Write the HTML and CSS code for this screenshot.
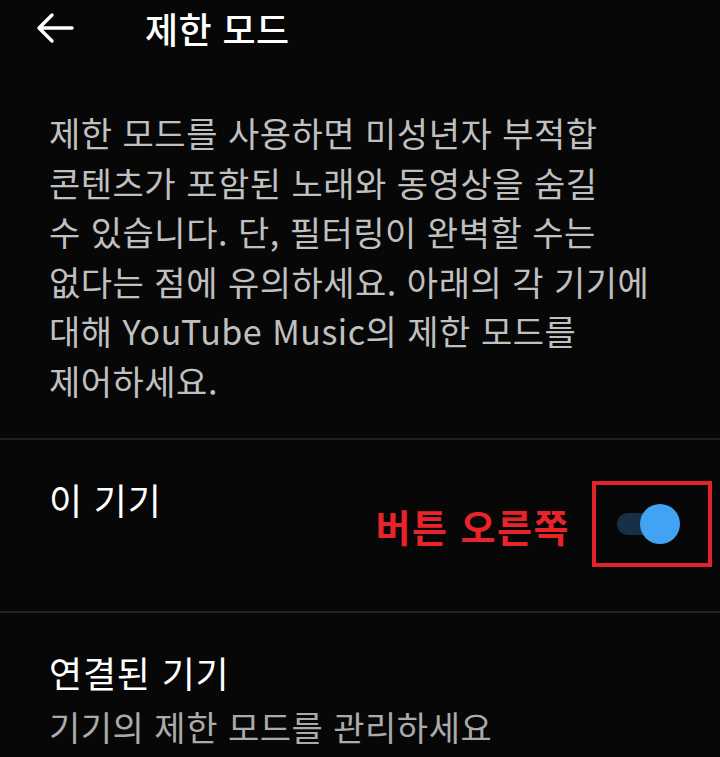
FILE: index.html
```html
<!DOCTYPE html>
<html lang="ko">
<head>
  <meta charset="UTF-8" />
  <meta name="viewport" content="width=device-width, initial-scale=1.0" />
  <title>제한 모드</title>
  <link rel="stylesheet" href="styles.css">
</head>
<body>
  <div class="screen">
    <header class="top-bar">
      <span class="back">
        <svg width="40" height="34" viewBox="0 0 40 34">
          <path d="M37 17 H4 M17 4 L4 17 L17 30" fill="none" stroke="#fff" stroke-width="3.4" stroke-linecap="round" stroke-linejoin="round"/>
        </svg>
      </span>
      <h1 class="title">제한 모드</h1>
    </header>

    <p class="intro">
      제한 모드를 사용하면 미성년자 부적합<br>
      콘텐츠가 포함된 노래와 동영상을 숨길<br>
      수 있습니다. 단, 필터링이 완벽할 수는<br>
      없다는 점에 유의하세요. 아래의 각 기기에<br>
      대해 YouTube Music의 제한 모드를<br>
      제어하세요.
    </p>

    <div class="row row-device">
      <div class="row-label">이 기기</div>
      <div class="row-side">
        <span class="note">버튼 오른쪽</span>
        <span class="mark">
          <span class="switch on"><span class="knob"></span></span>
        </span>
      </div>
    </div>

    <div class="row row-linked">
      <div class="row-label">연결된 기기</div>
      <div class="row-sub">기기의 제한 모드를 관리하세요</div>
    </div>
  </div>
</body>
</html>
```

FILE: styles.css
```css
html, body {
  margin: 0;
  padding: 0;
  background-color: #070707;
}

.screen {
  width: 720px;
  height: 757px;
  overflow: hidden;
  font-family: "Noto Sans CJK KR", "Noto Sans", sans-serif;
  color: #fff;
}

.top-bar {
  display: flex;
  align-items: center;
  height: 56px;
  padding-left: 35px;
}

.top-bar .back {
  display: flex;
  width: 40px;
  height: 34px;
}

.top-bar .title {
  margin: 0 0 0 70px;
  font-size: 36px;
  font-weight: 500;
  letter-spacing: 0.4px;
}

.intro {
  margin: 0;
  padding: 52px 20px 33px 49px;
  font-size: 34px;
  line-height: 49.5px;
  letter-spacing: 0.5px;
  color: #c0c0c0;
}

.row {
  border-top: 2px solid #202020;
  padding-left: 49px;
}

.row-device {
  display: flex;
  justify-content: space-between;
  height: 171px;
}

.row-label {
  font-size: 36px;
  line-height: 44px;
  letter-spacing: 0.8px;
  color: #fff;
}

.row-device .row-label {
  padding-top: 37px;
}

.row-side {
  display: flex;
  align-items: center;
  align-self: flex-start;
  margin-top: 41px;
  padding-right: 8px;
}

.note {
  font-size: 38px;
  font-weight: 700;
  letter-spacing: 1.5px;
  color: #e8242a;
  margin-right: 22px;
  padding-top: 2px;
}

.mark {
  display: flex;
  align-items: center;
  box-sizing: border-box;
  width: 120px;
  height: 86px;
  padding-left: 21px;
  border: 4px solid #e3232a;
}

.switch {
  position: relative;
  display: block;
  width: 54px;
  height: 22px;
  border-radius: 11px;
  background-color: #172f47;
}

.switch .knob {
  position: absolute;
  top: -9px;
  right: -9px;
  width: 40px;
  height: 40px;
  border-radius: 50%;
  background-color: #42a2f4;
}

.row-linked {
  padding-top: 37px;
}

.row-sub {
  margin-top: 8px;
  font-size: 34px;
  line-height: 50px;
  letter-spacing: 0.5px;
  color: #ababab;
}
```
